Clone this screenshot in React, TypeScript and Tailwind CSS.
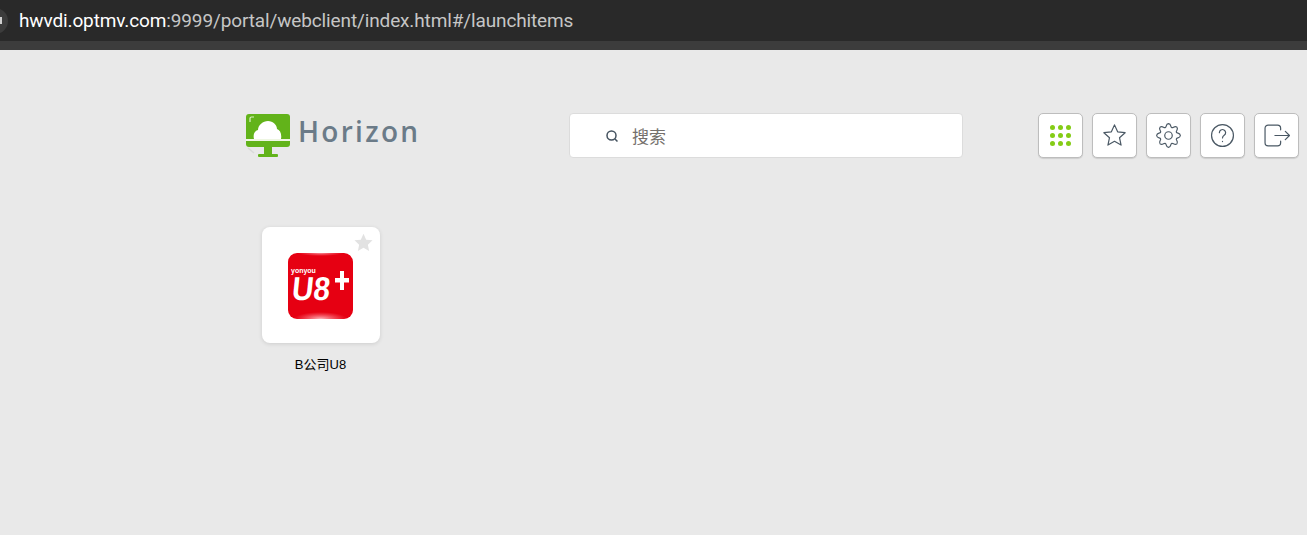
import React from "react";

const sans = "font-['Roboto','Noto_Sans_CJK_SC',sans-serif]";

// eight rounded cog teeth
const gearPath = () => {
    const pt = (r: number, a: number) => `${(12 + r * Math.cos(a)).toFixed(2)} ${(12 + r * Math.sin(a)).toFixed(2)}`;
    const step = Math.PI / 4;
    let d = `M${pt(8.2, -step / 2)}`;
    for (let i = 0; i < 8; i++) {
        const a = i * step;
        d += `C${pt(8.2, a - 0.2)} ${pt(11.4, a - 0.26)} ${pt(11.4, a)}`;
        d += `C${pt(11.4, a + 0.26)} ${pt(8.2, a + 0.2)} ${pt(8.2, a + step / 2)}`;
    }
    return d + "Z";
};

const HorizonMark = () => (
    <svg width="44" height="45" viewBox="0 0 44 45">
        <rect x="0" y="1" width="44" height="33" rx="3" fill="#62b31a" />
        <path d="M8 26c-1-4 0-8 4-9 0-5 5-9 10-9 5 0 9 4 9 8 3 1 5 5 4 10z" fill="#fff" />
        <rect x="0" y="26" width="44" height="2" fill="#eef6e2" />
        <path d="M4 9V5.500a1.500 1.500 0 0 1 1.500-1.500H8" fill="none" stroke="#dcefc6" strokeWidth="1.2" />
        <path d="M2 35l6 5" stroke="#d9d9d9" strokeWidth="1.500" />
        <rect x="18" y="34" width="8" height="8" fill="#62b31a" />
        <rect x="12" y="41" width="20" height="3" rx="1" fill="#62b31a" />
    </svg>
);

const U8Icon = () => (
    <svg width="65" height="66" viewBox="0 0 65 66">
        <defs>
            <radialGradient id="u8glow" cx="0.5" cy="1" r="0.5">
                <stop offset="0" stopColor="#ffc2c8" stopOpacity="0.95" />
                <stop offset="1" stopColor="#ff8a94" stopOpacity="0" />
            </radialGradient>
            <radialGradient id="u8top" cx="0.5" cy="0" r="0.5">
                <stop offset="0" stopColor="#ffb0b8" stopOpacity="0.8" />
                <stop offset="1" stopColor="#ff8a94" stopOpacity="0" />
            </radialGradient>
            <clipPath id="u8clip">
                <rect width="65" height="66" rx="9" />
            </clipPath>
        </defs>
        <g clipPath="url(#u8clip)">
            <rect width="65" height="66" fill="#e60012" />
            <rect x="6" y="52" width="53" height="14" fill="url(#u8glow)" />
            <rect x="10" y="0" width="45" height="6" fill="url(#u8top)" />
        </g>
        <text x="3" y="20" fontSize="7" fontWeight="700" fill="#fff" fontFamily="Liberation Sans, sans-serif">yonyou</text>
        <text x="8" y="47" fontSize="33" fontWeight="700" fill="#fff" fontFamily="Liberation Sans, sans-serif" textLength="38" lengthAdjust="spacingAndGlyphs" transform="skewX(-6)">U8</text>
        <path d="M52 18h4v7h5v4.500h-5V37h-4v-7.500h-5V25h5z" fill="#fff" />
    </svg>
);

const ToolButton = ({ children }: { children: React.ReactNode }) => (
    <button className="flex h-[45px] w-[45px] items-center justify-center rounded-[5px] border border-[#bdbdbd] bg-white shadow-[0_1px_1px_rgba(0,0,0,0.12)]">
        {children}
    </button>
);

const stroke = { fill: "none", stroke: "#4a5864", strokeWidth: 1.15, strokeLinecap: "round", strokeLinejoin: "round" } as const;

export default function App() {
    return (
        <div className={`flex h-[535px] w-[1307px] flex-col overflow-hidden bg-[#e9e9e9] ${sans}`}>
            <div className="flex h-[41px] items-center bg-[#292929]">
                <div className="ml-[-20px] flex h-[26px] w-[28px] items-center justify-end rounded-full bg-[#3c3c3c] pr-[6px]">
                    <span className="h-[7px] w-[2px] bg-[#d0d0d0]" />
                </div>
                <div className="ml-[11px] text-[19px] leading-none tracking-[-0.13px] text-[#c6c6c6]">
                    <span className="text-white">hwvdi.optmv.com</span>:9999/portal/webclient/index.html#/launchitems
                </div>
            </div>
            <div className="h-[9px] bg-[#3c3c3c]" />

            <div className="mt-[63px] flex h-[45px] items-start pl-[246px]">
                <div className="flex w-[323px] items-center gap-[8px]">
                    <HorizonMark />
                    <span className="mt-[-9px] font-['Open_Sans',sans-serif] text-[28px] font-semibold leading-none tracking-[2.3px] text-[#6b7b88]">
                        Horizon
                    </span>
                </div>
                <div className="flex h-[45px] w-[394px] items-center rounded-[4px] border border-[#dcdcdc] bg-white pl-[35px]">
                    <svg width="14" height="14" viewBox="0 0 14 14">
                        <circle cx="6.500" cy="6.500" r="4.500" fill="none" stroke="#44525f" strokeWidth="1.500" />
                        <path d="M10 10l2.500 2.500" stroke="#44525f" strokeWidth="1.500" />
                    </svg>
                    <span className="ml-[13px] font-['Noto_Sans_CJK_SC',sans-serif] text-[17px] leading-none text-[#75706c]">搜索</span>
                </div>
                <div className="ml-[75px] flex gap-[9px]">
                    <ToolButton>
                        <div className="grid grid-cols-3 gap-[3px]">
                            {Array.from({ length: 9 }).map((_, i) => (
                                <span key={i} className="h-[5px] w-[5px] rounded-full bg-[#84cc16]" />
                            ))}
                        </div>
                    </ToolButton>
                    <ToolButton>
                        <svg width="25" height="25" viewBox="0 0 24 24" {...stroke}>
                            <path d="M12 1.800l3 6.700 7.200.8-5.400 4.800 1.500 7.100L12 17.600l-6.300 3.600 1.500-7.100-5.400-4.800 7.200-.8z" />
                        </svg>
                    </ToolButton>
                    <ToolButton>
                        <svg width="25" height="25" viewBox="0 0 24 24" {...stroke}>
                            <path d={gearPath()} />
                            <circle cx="12" cy="12" r="3.600" />
                        </svg>
                    </ToolButton>
                    <ToolButton>
                        <svg width="25" height="25" viewBox="0 0 24 24" {...stroke}>
                            <circle cx="12" cy="12" r="10.500" />
                            <path d="M9 9.300a3 3 0 1 1 4.600 2.500c-1 .7-1.600 1.300-1.600 2.600" />
                            <path d="M12 17.600v.2" />
                        </svg>
                    </ToolButton>
                    <ToolButton>
                        <svg width="26" height="25" viewBox="0 0 25 24" {...stroke}>
                            <path d="M16 6.500V5a3 3 0 0 0-3-3H4a3 3 0 0 0-3 3v14a3 3 0 0 0 3 3h9a3 3 0 0 0 3-3v-1.500" />
                            <path d="M10.500 12h14M20.500 8l4 4-4 4" />
                        </svg>
                    </ToolButton>
                </div>
            </div>

            <div className="ml-[262px] mt-[69px] flex w-[118px] flex-col items-center self-start">
                <div className="relative flex h-[116px] w-[118px] items-center justify-center rounded-[8px] bg-white pt-[2px] pr-[2px] shadow-[0_1px_4px_rgba(0,0,0,0.12)]">
                    <U8Icon />
                    <svg className="absolute right-[7px] top-[6px]" width="19" height="19" viewBox="0 0 24 24">
                        <path d="M12 1l3.400 7.400 8 .9-5.900 5.400 1.600 7.900-7.100-4-7.100 4 1.600-7.900L.6 9.300l8-.9z" fill="#e2e2e2" />
                    </svg>
                </div>
                <div className="mt-[14px] pr-[1px] font-['Liberation_Sans','Noto_Sans_CJK_SC',sans-serif] text-[13px] leading-[16px] text-black">
                    B公司U8
                </div>
            </div>
        </div>
    );
}
